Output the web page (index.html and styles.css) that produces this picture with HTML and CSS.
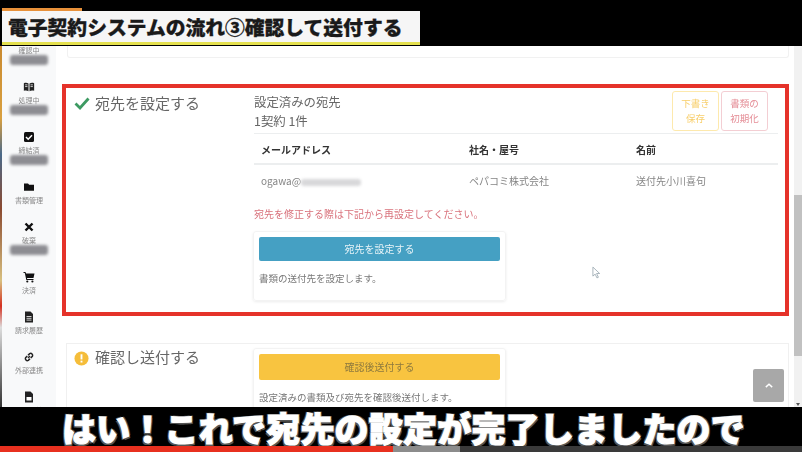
FILE: index.html
```html
<!DOCTYPE html>
<html lang="ja">
<head>
<meta charset="utf-8">
<title>電子契約システムの流れ</title>
<link rel="stylesheet" href="styles.css">
</head>
<body>
<div class="frame">
  <header class="top">
    <div class="top-progress"></div>
    <h1 class="title">電子契約システムの流れ③確認して送付する</h1>
  </header>
  <div class="app">
    <div class="edge"></div>
    <nav class="side">
      <div class="nav first"><span class="lab">確認中</span><span class="smear"></span></div>
      <div class="nav">
        <svg class="ico" viewBox="0 0 14 12"><path d="M1 1.5c2-.8 4-.6 5.4.4v9c-1.4-.9-3.400-1-5.400-.4zM13 1.500c-2-.8-4-.6-5.400.4v9c1.400-.9 3.400-1 5.400-.4z" fill="#222"/><path d="M2.500 3.500h2.700M2.500 5.500h2.700M8.800 3.500h2.700M8.800 5.500h2.700" stroke="#fff" stroke-width=".9"/></svg>
        <span class="lab">処理中</span><span class="smear"></span></div>
      <div class="nav">
        <svg class="ico" viewBox="0 0 12 12"><rect x="1" y="1" width="10" height="10" rx="1.500" fill="#111"/><path d="M3 6l2.200 2.200L9 4.200" fill="none" stroke="#fff" stroke-width="1.500"/></svg>
        <span class="lab">締結済</span><span class="smear"></span></div>
      <div class="nav">
        <svg class="ico" viewBox="0 0 12 12"><path d="M1 2.500h4l1.200 1.300H11v6H1z" fill="#111"/></svg>
        <span class="lab">書類管理</span></div>
      <div class="nav">
        <svg class="ico" viewBox="0 0 12 12"><path d="M2.500 2.500l7 7M9.500 2.500l-7 7" stroke="#111" stroke-width="2.400"/></svg>
        <span class="lab">破棄</span><span class="smear"></span></div>
      <div class="nav">
        <svg class="ico" viewBox="0 0 12 12"><path d="M.5 1H2.500l.5 1.500h8.500L10.500 7H4l.2 1h6.300v1H3.300L1.800 2H.5z" fill="#111"/><circle cx="4.300" cy="10.500" r="1.100" fill="#111"/><circle cx="9.400" cy="10.500" r="1.100" fill="#111"/></svg>
        <span class="lab">決済</span></div>
      <div class="nav">
        <svg class="ico" viewBox="0 0 12 12"><path d="M2 .5h5.500L10 3v8.500H2z" fill="#222"/><path d="M3.500 5.500h5M3.500 7.300h5M3.500 9.100h5" stroke="#fff" stroke-width=".8"/></svg>
        <span class="lab">請求履歴</span></div>
      <div class="nav">
        <svg class="ico" viewBox="0 0 12 12"><path d="M5 7l2-2M4.300 5 2.600 6.700a2 2 0 0 0 2.700 2.700L7 7.700M7.700 7l1.700-1.700a2 2 0 0 0-2.700-2.700L5 4.300" fill="none" stroke="#222" stroke-width="1.500"/></svg>
        <span class="lab">外部連携</span></div>
      <div class="nav">
        <svg class="ico" viewBox="0 0 12 12"><path d="M2 .5h5.500L10 3v8.500H2z" fill="#222"/><rect x="3.500" y="6" width="5" height="3.500" fill="#fff"/></svg>
        <span class="lab">フォーム管理</span></div>
    </nav>
    <main class="main">
      <div class="stub"></div>
      <section class="step step-done">
        <div class="step-head">
          <svg class="step-ico" viewBox="0 0 16 14"><path d="M1.500 7.500l4.500 4.500L14.500 2.500" fill="none" stroke="#3d9a62" stroke-width="2.800"/></svg>
          <h2 class="step-title">宛先を設定する</h2>
        </div>
        <div class="step-body">
          <div class="summary">
            <div class="summary-text">
              <p class="line">設定済みの宛先</p>
              <p class="line">1契約 1件</p>
            </div>
            <div class="actions">
              <button class="act act-draft">下書き<br>保存</button>
              <button class="act act-reset">書類の<br>初期化</button>
            </div>
          </div>
          <table class="dest">
            <thead>
              <tr><th class="c1">メールアドレス</th><th class="c2">社名・屋号</th><th>名前</th></tr>
            </thead>
            <tbody>
              <tr><td>ogawa@<span class="mail-smear"></span></td><td>ペパコミ株式会社</td><td>送付先小川喜句</td></tr>
            </tbody>
          </table>
          <p class="note">宛先を修正する際は下記から再設定してください。</p>
          <div class="panel panel-a">
            <div class="cta cta-blue">宛先を設定する</div>
            <p class="desc">書類の送付先を設定します。</p>
          </div>
        </div>
      </section>
      <section class="step step-next">
        <div class="step-head">
          <svg class="step-ico" viewBox="0 0 16 16"><circle cx="8" cy="8" r="7.500" fill="#f5bd3a"/><rect x="7" y="3.500" width="2" height="5.500" fill="#fff"/><rect x="7" y="10.300" width="2" height="2" fill="#fff"/></svg>
          <h2 class="step-title">確認し送付する</h2>
        </div>
        <div class="panel panel-b">
          <div class="cta cta-yellow">確認後送付する</div>
          <p class="desc">設定済みの書類及び宛先を確認後送付します。</p>
        </div>
      </section>
    </main>
    <div class="scroll"><div class="thumb"></div><div class="arrow"></div></div>
    <div class="to-top"><svg viewBox="0 0 10 6" class="to-top-ico"><path d="M1 5l4-3.500L9 5" fill="none" stroke="#fff" stroke-width="1.800"/></svg></div>
    <svg class="cursor" viewBox="0 0 10 14"><path d="M1 1v10l2.500-2.200L5.500 13l1.600-.7-2-4.200H8.500z" fill="#fff" stroke="#8a9aa5" stroke-width=".8"/></svg>
  </div>
  <footer class="cap">
    <p class="cap-text">はい！これで宛先の設定が完了しましたので</p>
    <div class="bar"><div class="bar-played"></div><div class="bar-buffer"></div></div>
  </footer>
</div>
</body>
</html>
```

FILE: styles.css
```css
* { box-sizing: border-box; }
html, body { margin: 0; padding: 0; background: #000; }
.frame {
  width: 802px; height: 452px; overflow: hidden;
  display: flex; flex-direction: column;
  font-family: "Noto Sans CJK JP", "Noto Sans", sans-serif;
}

.top { height: 46px; flex: none; background: #000; padding: 8px 0 0 2px; }
.top-progress { width: 80px; height: 3px; background: #e8913a; }
.title {
  width: 418px; height: 34px; margin: 0; padding: 0 0 0 6px;
  background: #f6f6f6; border-bottom: 3px solid #e4e04e;
  font-size: 19.800px; line-height: 32px; font-weight: 900; color: #1a1a1a;
  -webkit-text-stroke: .3px #1a1a1a;
  white-space: nowrap;
}

.app { position: relative; flex: 1; min-height: 0; display: flex; overflow: hidden; background: #fff; }
.edge {
  width: 2px; flex: none;
  background: linear-gradient(#c98a30 0, #d9a040 20%, #4b6a8a 30%, #8a4a30 45%, #d8c080 65%, #d43020 72%, #ddd 78%, #333 100%);
}
.side {
  width: 54px; flex: none; background: #f8f9fa;
  display: flex; flex-direction: column; align-items: center; gap: 16px;
}
.nav { display: flex; flex-direction: column; align-items: center; width: 100%; flex: none; }
.nav.first { margin-top: -1px; }
.ico { width: 12px; height: 12px; margin-bottom: 2px; display: block; filter: blur(.3px); }
.lab { font-size: 7px; line-height: 10px; color: #888; white-space: nowrap; filter: blur(.4px); }
.smear { width: 38px; height: 10px; background: #8d8d92; border-radius: 3px; filter: blur(1.500px); }

.main { flex: 1; min-width: 0; padding: 0 5px 0 6px; display: flex; flex-direction: column; filter: blur(.35px); }
.stub {
  height: 12px; flex: none; margin: 0 0 26px 5px;
  border: 1px solid #f1f1f1; border-top: 0; border-radius: 0 0 3px 3px;
}
.step { display: flex; flex: none; }
.step-done { height: 232px; border: 4px solid #e5322a; padding: 0 7px 0 8px; }
.step-next { margin: 27px 0 0 4px; height: 120px; border: 1px solid #f0f0f0; padding: 0 0 0 7px; }
.step-head { width: 180px; flex: none; display: flex; align-items: flex-start; gap: 5px; }
.step-done .step-head { padding-top: 4px; }
.step-next .step-head { padding-top: 2px; width: 179px; gap: 6px; }
.step-ico { width: 16px; height: 14px; flex: none; margin-top: 4px; }
.step-next .step-ico { height: 15px; width: 15px; margin-top: 5px; }
.step-title { margin: 0; font-size: 15px; line-height: 22px; font-weight: 400; color: #666; white-space: nowrap; }

.step-body { flex: 1; min-width: 0; }
.summary { height: 46px; display: flex; justify-content: space-between; padding-top: 3px; border-bottom: 1px solid #eceeef; }
.summary-text { padding-top: 2px; }
.line { margin: 0; font-size: 12.400px; line-height: 19px; color: #666; white-space: nowrap; }
.actions { display: flex; gap: 2px; margin-right: 10px; }
.act {
  width: 47px; height: 40px; padding: 0; background: #fff; border-radius: 3px;
  font: 400 9.500px/15px "Noto Sans CJK JP", sans-serif;
}
.act-draft { border: 1px solid #fde9ad; color: #f8cf6c; }
.act-reset { border: 1px solid #f3ced3; color: #e58e97; }

.dest { width: 100%; border-collapse: collapse; table-layout: fixed; }
.c1 { width: 215px; }
.c2 { width: 167px; }
.dest th { height: 30px; padding: 2px 0 0 7px; text-align: left; font-size: 10px; font-weight: 700; color: #333; border-bottom: 2px solid #eceeef; white-space: nowrap; }
.dest th + th { padding-left: 0; }
.dest td { height: 32px; padding: 0 0 0 7px; font-size: 10px; color: #858585; white-space: nowrap; }
.dest td + td { padding-left: 0; }
.mail-smear { display: inline-block; width: 60px; height: 7px; vertical-align: -1px; background: #d8d8da; border-radius: 3px; filter: blur(1.500px); }
.note { margin: 11px 0 0; font-size: 10px; line-height: 14px; color: #d9727c; white-space: nowrap; }

.panel { border: 1px solid #f3f3f3; border-radius: 3px; padding: 5px; box-shadow: 0 1px 3px rgba(0,0,0,.08); }
.panel-a { width: 253px; height: 70px; margin: 10px 0 0 -1px; }
.panel-b { width: 253px; height: 90px; margin-top: 4px; }
.cta { height: 24px; border-radius: 2px; text-align: center; font-size: 10px; line-height: 24px; }
.cta-blue { background: #45a0c3; color: #e8f4f8; }
.cta-yellow { height: 26px; line-height: 26px; background: #f8c440; color: #8e7a3e; }
.desc { margin: 11px 0 0; font-size: 9.500px; line-height: 13px; color: #777; white-space: nowrap; }

.scroll { width: 8px; flex: none; background: #f1f1f1; padding-top: 149px; position: relative; }
.thumb { height: 161px; background: #c1c1c1; }
.arrow { margin: 47px auto 0; width: 0; height: 0; border: 2px solid transparent; border-top: 3px solid #555; border-bottom: 0; }

.to-top {
  position: absolute; left: 753px; top: 323px; width: 31px; height: 33px;
  background: #a8a8a8; border-radius: 2px;
  display: flex; align-items: center; justify-content: center;
}
.to-top-ico { width: 8px; height: 5px; }
.cursor { position: absolute; left: 592px; top: 220px; width: 9px; height: 13px; }

.cap { height: 45px; flex: none; background: #000; position: relative; z-index: 1; display: flex; flex-direction: column; }
.cap-text {
  margin: 0; height: 39px; padding: 3px 0 0 62px;
  font-size: 34px; line-height: 36px; font-weight: 900; color: #fff; letter-spacing: .2px;
  -webkit-text-stroke: 1.100px #fff;
  text-shadow: 1.500px 1.500px 0 #555, -1.500px 1.500px 0 #555, 1.500px -1.500px 0 #555, -1.500px -1.500px 0 #555;
  white-space: nowrap;
}
.bar { height: 6px; flex: none; background: #3a3a3a; display: flex; position: relative; }
.bar-played { width: 393px; background: #e8301f; }
.bar-buffer { width: 67px; background: #8c8c8c; }
```
